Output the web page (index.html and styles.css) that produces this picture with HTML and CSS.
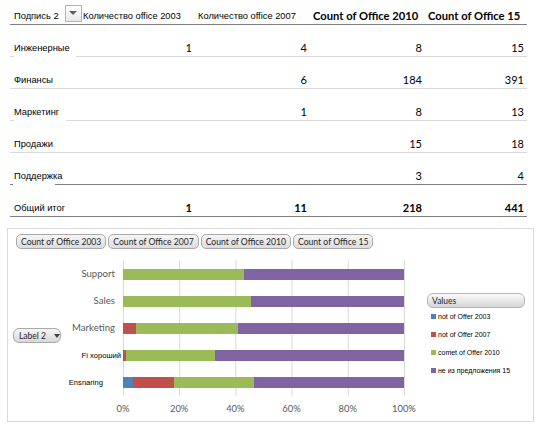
FILE: index.html
```html
<!DOCTYPE html>
<html lang="ru">
<head>
<meta charset="utf-8">
<title>Pivot</title>
<link rel="stylesheet" href="styles.css">
</head>
<body>
<div class="pivot">
  <div class="row head">
    <div class="c lbl"><span class="lt">Подпись 2</span><span class="dd"><i></i></span></div>
    <div class="c ht">Количество office 2003</div>
    <div class="c ht p3">Количество office 2007</div>
    <div class="c hb">Count of Office 2010</div>
    <div class="c hb">Count of Office 15</div>
  </div>
  <div class="row">
    <div class="c lbl gap-a">Инженерные</div>
    <div class="c num">1</div>
    <div class="c num">4</div>
    <div class="c num">8</div>
    <div class="c num">15</div>
  </div>
  <div class="row">
    <div class="c lbl">Финансы</div>
    <div class="c num"></div>
    <div class="c num">6</div>
    <div class="c num">184</div>
    <div class="c num">391</div>
  </div>
  <div class="row">
    <div class="c lbl gap-b">Маркетинг</div>
    <div class="c num"></div>
    <div class="c num">1</div>
    <div class="c num">8</div>
    <div class="c num">13</div>
  </div>
  <div class="row">
    <div class="c lbl">Продажи</div>
    <div class="c num"></div>
    <div class="c num"></div>
    <div class="c num">15</div>
    <div class="c num">18</div>
  </div>
  <div class="row dark">
    <div class="c lbl gap-c">Поддержка</div>
    <div class="c num"></div>
    <div class="c num"></div>
    <div class="c num">3</div>
    <div class="c num">4</div>
  </div>
  <div class="row dark total">
    <div class="c lbl">Общий итог</div>
    <div class="c num">1</div>
    <div class="c num">11</div>
    <div class="c num">218</div>
    <div class="c num">441</div>
  </div>
</div>

<div class="chart">
  <div class="fields">
    <span class="fbtn">Count of Office 2003</span>
    <span class="fbtn">Count of Office 2007</span>
    <span class="fbtn">Count of Office 2010</span>
    <span class="fbtn">Count of Office 15</span>
  </div>
  <div class="cbody">
    <div class="left">
      <div class="lwrap"><span class="lbtn">Label 2<i></i></span></div>
      <div class="cats">
        <div class="cat">Support</div>
        <div class="cat">Sales</div>
        <div class="cat">Marketing</div>
        <div class="cat alt fi">Fi хороший</div>
        <div class="cat alt en">Ensnaring</div>
      </div>
    </div>
    <div class="plotcol">
      <div class="plot">
        <div class="band"><div class="bar"><span class="s3" style="width:43%"></span><span class="s4" style="width:57%"></span></div></div>
        <div class="band"><div class="bar"><span class="s3" style="width:45.4%"></span><span class="s4" style="width:54.6%"></span></div></div>
        <div class="band"><div class="bar"><span class="s2" style="width:4.6%"></span><span class="s3" style="width:36.4%"></span><span class="s4" style="width:59%"></span></div></div>
        <div class="band"><div class="bar"><span class="s2" style="width:1%"></span><span class="s3" style="width:31.7%"></span><span class="s4" style="width:67.3%"></span></div></div>
        <div class="band"><div class="bar"><span class="s1" style="width:3.7%"></span><span class="s2" style="width:14.5%"></span><span class="s3" style="width:28.5%"></span><span class="s4" style="width:53.3%"></span></div></div>
      </div>
      <div class="axis">
        <span>0%</span><span>20%</span><span>40%</span><span>60%</span><span>80%</span><span>100%</span>
      </div>
    </div>
    <div class="legend">
      <div class="vbtn">Values</div>
      <div class="litem"><span class="sq s1"></span>not of Offer 2003</div>
      <div class="litem"><span class="sq s2"></span>not of Offer 2007</div>
      <div class="litem"><span class="sq s3"></span>comet of Offer 2010</div>
      <div class="litem"><span class="sq s4"></span>не из предложения 15</div>
    </div>
  </div>
</div>
</body>
</html>
```

FILE: styles.css
```css
* { box-sizing: border-box; margin: 0; padding: 0; }

body {
  width: 541px;
  height: 432px;
  overflow: hidden;
  background: #fff;
  color: #000;
  font-family: "Liberation Sans", Arial, sans-serif;
}

/* ---------- pivot table ---------- */
.pivot {
  margin-left: 10px;
  width: 517px;
}

.row {
  display: grid;
  grid-template-columns: 73px 112px 115px 115px 102px;
  height: 32px;
}

.row > .c {
  display: flex;
  align-items: flex-end;
  padding-bottom: 2px;
  border-bottom: 1px solid #d9d9d9;
  white-space: nowrap;
  line-height: 12px;
}

.row.head { height: 25px; }
.row.head > .c,
.row.dark > .c { border-bottom-color: #808080; }

.lbl {
  padding-left: 4px;
  font-size: 9.3px;
}

.gap-a, .gap-b, .gap-c {
  border-bottom-color: transparent !important;
  background-origin: border-box;
  background-repeat: no-repeat;
  background-position: left bottom;
  background-size: 100% 1px;
}
.gap-a { background-image: linear-gradient(90deg, #d9d9d9 4px, transparent 4px, transparent 66px, #d9d9d9 66px); }
.gap-b { background-image: linear-gradient(90deg, #d9d9d9 4px, transparent 4px, transparent 56px, #d9d9d9 56px); }
.gap-c { background-image: linear-gradient(90deg, #808080 3px, transparent 3px, transparent 45px, #808080 45px); }

.head .lbl { padding-bottom: 2px; }

.dd {
  display: flex;
  align-items: center;
  justify-content: center;
  width: 17px;
  height: 17px;
  margin-left: 6px;
  border: 1px solid #b4b4b4;
  background: linear-gradient(#ffffff, #e9e9e9);
}
.dd i {
  width: 0;
  height: 0;
  border-left: 4px solid transparent;
  border-right: 4px solid transparent;
  border-top: 4px solid #5f5f5f;
  margin-top: -2px;
}

.ht { font-size: 9.3px; }
.p3 { padding-left: 3px; }

.hb {
  padding-left: 3px;
  font-family: Lato, "Liberation Sans", sans-serif;
  font-weight: 700;
  font-size: 11.2px;
}

.num {
  justify-content: flex-end;
  padding-right: 3px;
  font-family: Lato, "Liberation Sans", sans-serif;
  font-size: 11px;
}
.total .num { font-weight: 700; }

/* ---------- chart ---------- */
.chart {
  margin: 11px 0 0 7px;
  width: 527px;
  height: 194px;
  border: 1px solid #d9d9d9;
  padding-top: 5px;
  font-family: Lato, "Liberation Sans", sans-serif;
}

.fields {
  display: flex;
  gap: 2px;
  padding-left: 8px;
  height: 15px;
}

.fbtn {
  display: flex;
  align-items: center;
  height: 15px;
  padding: 0 4px;
  border: 1px solid #a9a9a9;
  border-radius: 5px;
  background: linear-gradient(#f6f6f6, #dcdcdc);
  font-size: 8.6px;
  color: #262626;
  white-space: nowrap;
}

.cbody {
  display: flex;
  margin-top: 11px;
}

.left {
  display: flex;
  width: 115px;
}

.lwrap {
  width: 53px;
  padding-left: 5px;
  padding-top: 68px;
}

.lbtn {
  display: flex;
  align-items: center;
  width: 48px;
  height: 15px;
  padding-left: 5px;
  border: 1px solid #a9a9a9;
  border-radius: 6px;
  background: linear-gradient(#f6f6f6, #d8d8d8);
  font-size: 8.5px;
  color: #262626;
}
.lbtn i {
  margin-left: 8px;
  width: 0;
  height: 0;
  border-left: 3px solid transparent;
  border-right: 3px solid transparent;
  border-top: 4px solid #404040;
}

.cats {
  flex: 1;
  display: flex;
  flex-direction: column;
}

.cat {
  height: 27.2px;
  display: flex;
  align-items: center;
  justify-content: flex-end;
  padding-right: 8px;
  font-size: 9.6px;
  color: #595959;
  white-space: nowrap;
}
.cat.alt {
  font-family: "Liberation Sans", Arial, sans-serif;
  font-size: 7.6px;
  color: #000;
  position: relative;
  z-index: 2;
}
.cat.fi { padding-right: 2px; }
.cat.en { padding-right: 20px; }

.plotcol { width: 282px; }

.plot {
  height: 136px;
  border-right: 1px solid #d9d9d9;
  background-image: linear-gradient(90deg, #d9d9d9 1px, transparent 1px);
  background-size: 56.2px 100%;
  background-repeat: repeat-x;
  display: flex;
  flex-direction: column;
}

.band {
  height: 27.2px;
  display: flex;
  align-items: center;
  padding-top: 1px;
}

.bar {
  display: flex;
  width: 100%;
  height: 11px;
}
.bar span { height: 100%; }

.s1 { background: #4f81bd; }
.s2 { background: #c0504d; }
.s3 { background: #9bbb59; }
.s4 { background: #8064a2; }

.axis {
  display: flex;
  justify-content: space-between;
  width: 311px;
  margin-left: -15px;
  margin-top: 7px;
  line-height: 12px;
}
.axis span {
  width: 30px;
  text-align: center;
  font-size: 9.4px;
  color: #595959;
}

.legend {
  margin-left: 22px;
  width: 98px;
  padding-top: 33px;
}

.vbtn {
  display: flex;
  align-items: center;
  height: 15px;
  padding-left: 4px;
  border: 1px solid #b4b4b4;
  border-radius: 6px;
  background: linear-gradient(#fafafa, #d6d6d6);
  font-size: 8.5px;
  color: #262626;
}

.litem {
  display: flex;
  align-items: center;
  height: 18px;
  padding-left: 4px;
  font-family: "Liberation Sans", Arial, sans-serif;
  font-size: 7px;
  color: #000;
  white-space: nowrap;
}
.vbtn + .litem { margin-top: -1px; }

.sq {
  width: 5px;
  height: 5px;
  margin-right: 2px;
}
```
